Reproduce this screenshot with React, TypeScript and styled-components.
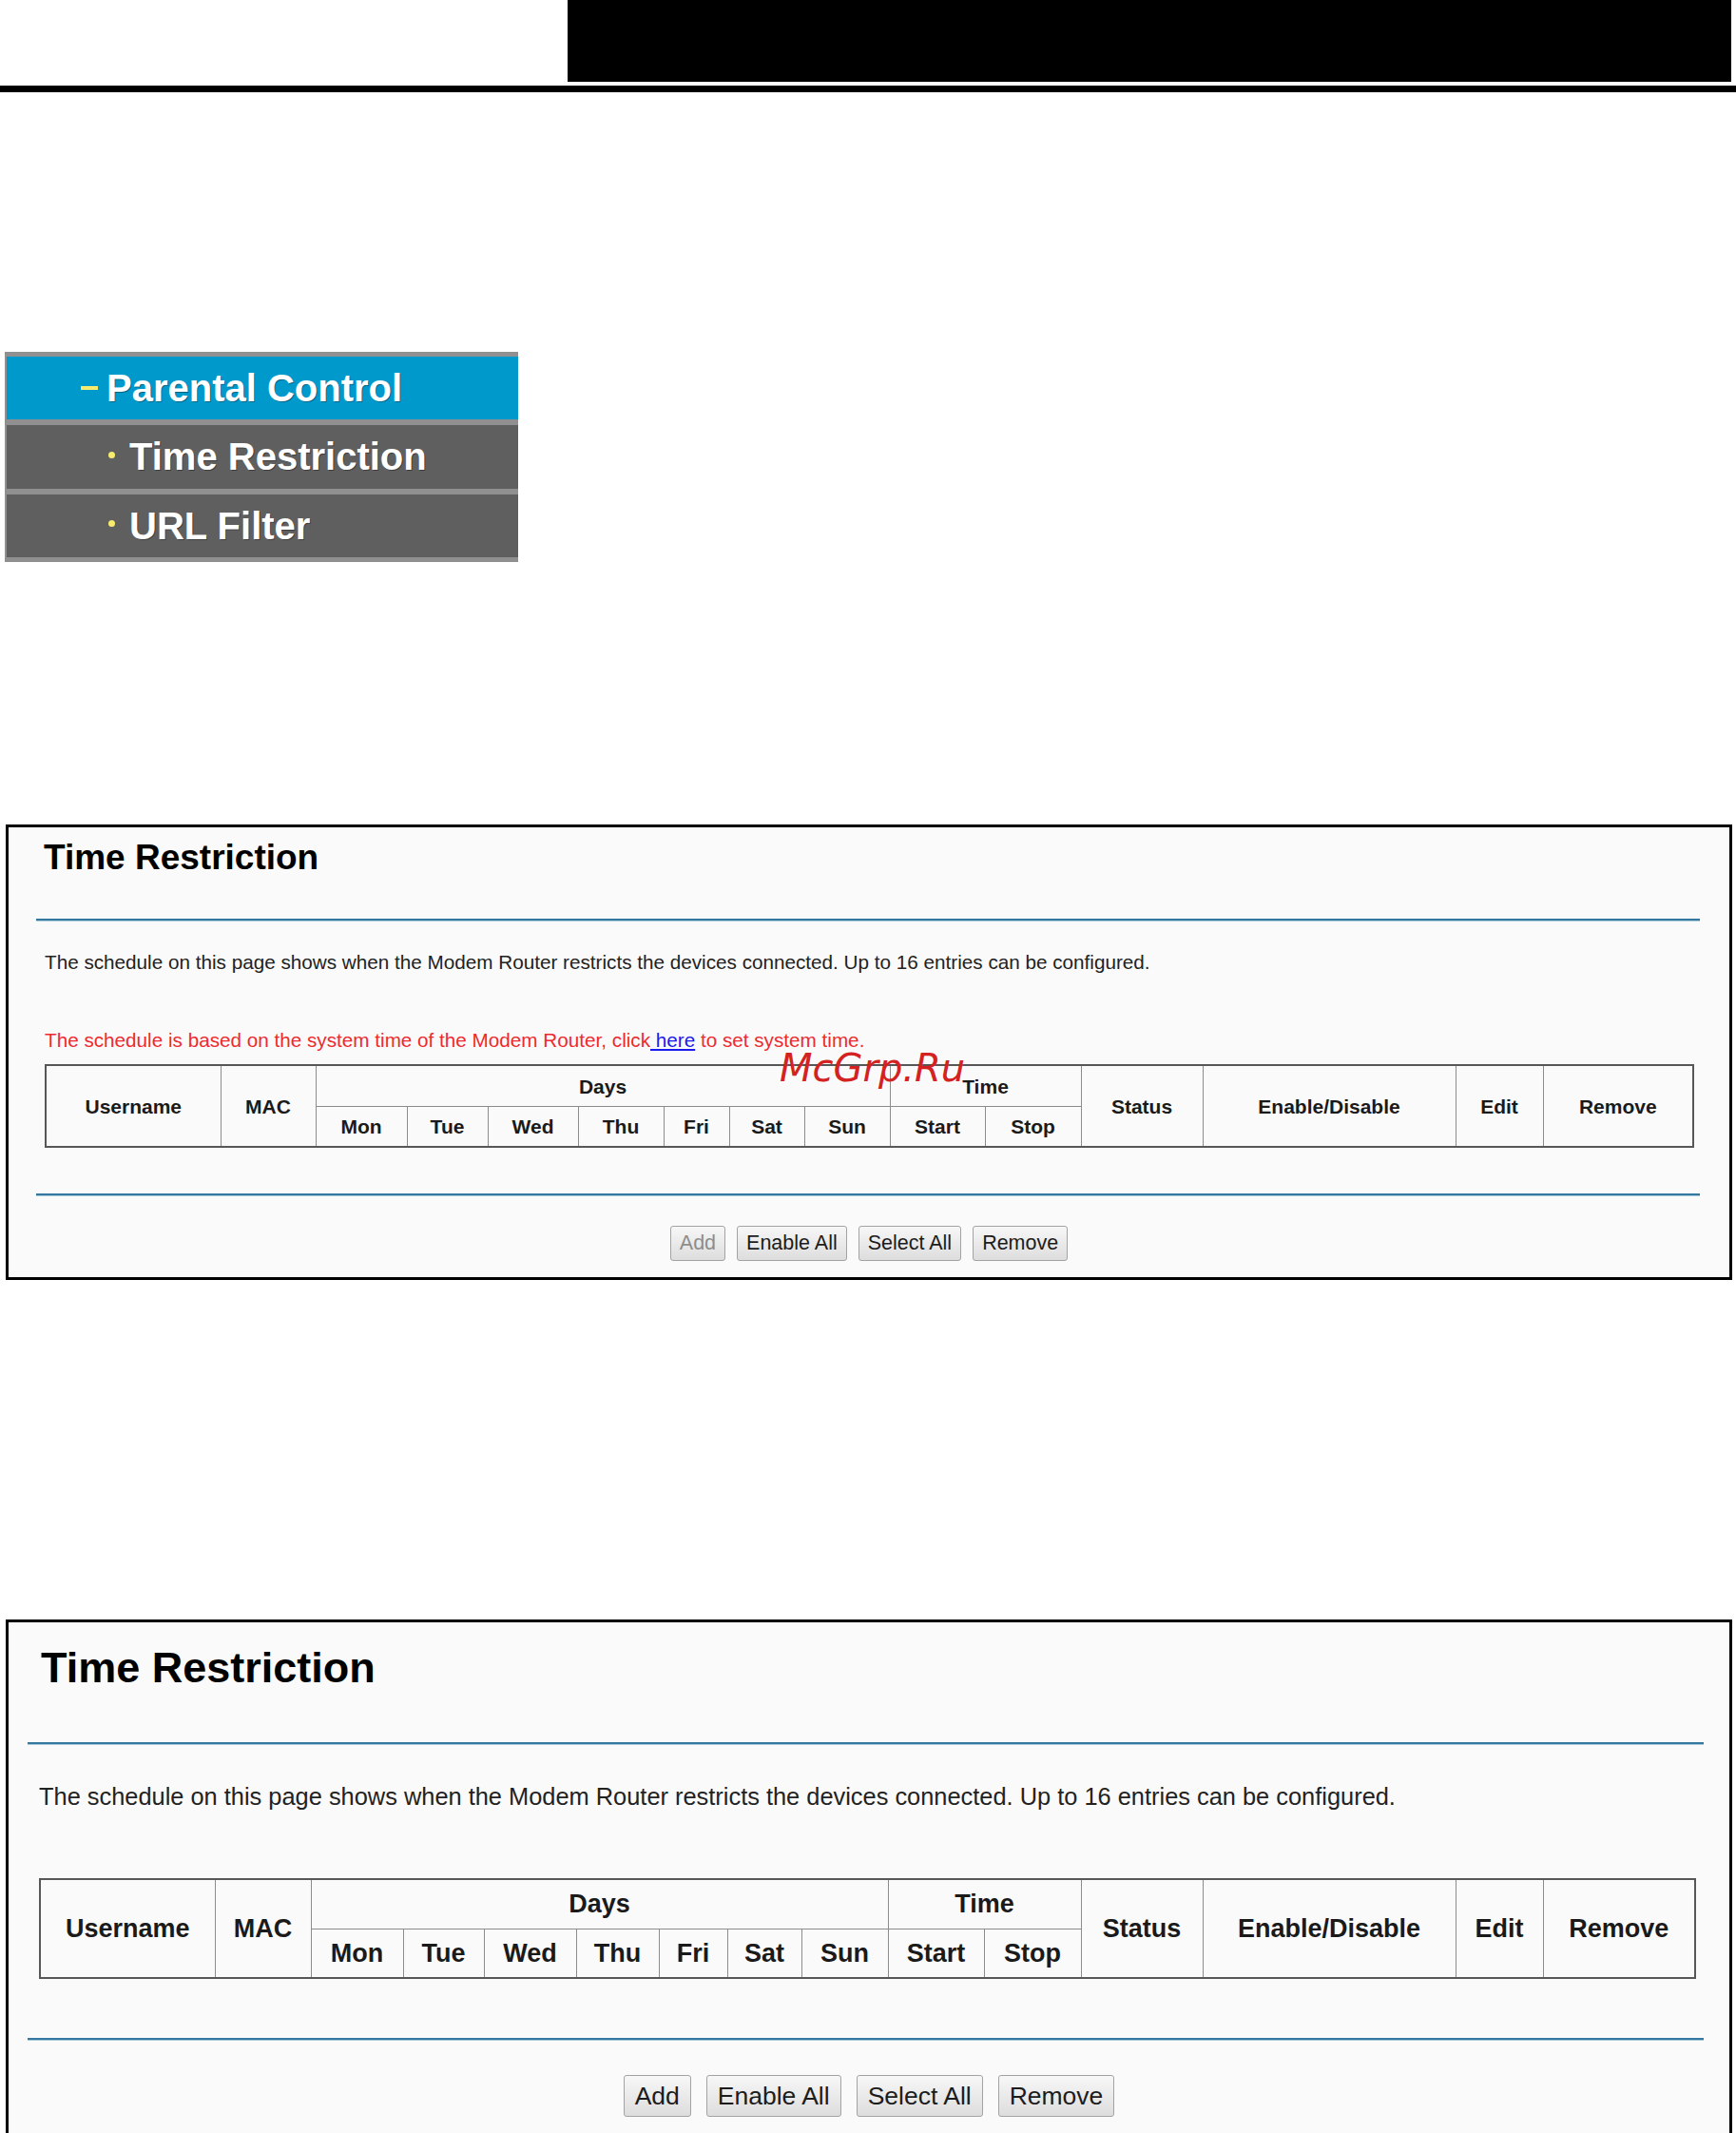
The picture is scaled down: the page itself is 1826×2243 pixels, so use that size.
import styled, { createGlobalStyle } from 'styled-components';

const GlobalStyle = createGlobalStyle`
  html, body {
    margin: 0;
    padding: 0;
    background: #ffffff;
  }
  body {
    font-family: "Liberation Sans", Arial, Helvetica, sans-serif;
    color: #1a1a1a;
  }
`;

type Size = {
  titleSize: number;
  titleTop: number;
  titleLeft: number;
  ruleTop: number;
  ruleLeft: number;
  ruleRight: number;
  descSize: number;
  descTop: number;
  descLeft: number;
  noteTop: number;
  tableTop: number;
  tableLeft: number;
  cols: number[];
  rowH: number;
  thSize: number;
  rule2Top: number;
  btnTop: number;
  btnSize: number;
  btnH: number;
  btnPad: number;
  btnGap: number;
  bottomPad: number;
};

const small: Size = {
  titleSize: 37,
  titleTop: 13,
  titleLeft: 37,
  ruleTop: 46,
  ruleLeft: 29,
  ruleRight: 31,
  descSize: 20.7,
  descTop: 33,
  descLeft: 38,
  noteTop: 61,
  tableTop: 15,
  tableLeft: 38,
  cols: [184, 100, 96, 85, 95, 90, 69, 79, 90, 100, 101, 128, 266, 92, 158],
  rowH: 42.5,
  thSize: 21,
  rule2Top: 48,
  btnTop: 31,
  btnSize: 21.5,
  btnH: 37,
  btnPad: 9,
  btnGap: 12,
  bottomPad: 17,
};

const large: Size = {
  titleSize: 45,
  titleTop: 25,
  titleLeft: 34,
  ruleTop: 56,
  ruleLeft: 20,
  ruleRight: 27,
  descSize: 25.4,
  descTop: 42,
  descLeft: 32,
  noteTop: 0,
  tableTop: 72.5,
  tableLeft: 32,
  cols: [184, 101, 97, 85, 97, 87, 72, 78, 91, 101, 102, 128, 266, 92, 160],
  rowH: 51.5,
  thSize: 27,
  rule2Top: 62,
  btnTop: 36,
  btnSize: 26.5,
  btnH: 44,
  btnPad: 11,
  btnGap: 16,
  bottomPad: 17,
};

/* ---------- page header ---------- */

const Header = styled.header`
  display: flex;
  height: 86px;
`;

const HeaderBlock = styled.div`
  margin-left: 597px;
  width: 1224px;
  background: #000;
`;

const HeaderRule = styled.div`
  margin-top: 4px;
  height: 7px;
  background: #000;
`;

/* ---------- side menu ---------- */

const Menu = styled.nav`
  margin: 273px 0 0 5px;
  width: 538px;
  background: #909090;
  padding: 5px 0 5px 2px;
  display: flex;
  flex-direction: column;
  gap: 6px;
`;

const MenuItem = styled.div<{ $active?: boolean }>`
  height: ${({ $active }) => ($active ? 66 : 66.5)}px;
  display: flex;
  align-items: center;
  padding-left: ${({ $active }) => ($active ? 78 : 107)}px;
  background: ${({ $active }) => ($active ? '#0099cc' : '#5f5f5f')};
  color: #ffffff;
  font-weight: 700;
  font-size: 40px;
  line-height: 1;
  text-shadow: 1px 1px 0 rgba(0, 0, 0, 0.35);
`;

const Minus = styled.span`
  width: 18px;
  height: 4px;
  margin-right: 9px;
  background: #f7ec6e;
`;

const Dot = styled.span`
  width: 7px;
  height: 7px;
  border-radius: 50%;
  margin-right: 15px;
  background: #f7ec6e;
  transform: translateY(-2px);
`;

/* ---------- panels ---------- */

const Panel = styled.section<{ $top: number; $s: Size }>`
  position: relative;
  margin: ${({ $top }) => $top}px 0 0 6px;
  width: 1816px;
  box-sizing: border-box;
  border: 3px solid #000;
  background: #fafafa;
  padding: ${({ $s }) => $s.titleTop}px 0 ${({ $s }) => $s.bottomPad}px;
`;

const Title = styled.h1<{ $s: Size }>`
  margin: 0 0 0 ${({ $s }) => $s.titleLeft}px;
  font-size: ${({ $s }) => $s.titleSize}px;
  line-height: 1;
  font-weight: 700;
  color: #000;
`;

const Rule = styled.div<{ $s: Size; $top: number }>`
  margin: ${({ $top }) => $top}px ${({ $s }) => $s.ruleRight}px 0 ${({ $s }) => $s.ruleLeft}px;
  height: 2px;
  background: #34789f;
  border-bottom: 1px solid #a9cadb;
`;

const Text = styled.p<{ $s: Size; $top: number; $red?: boolean }>`
  margin: ${({ $top }) => $top}px 0 0 ${({ $s }) => $s.descLeft}px;
  font-size: ${({ $s }) => $s.descSize}px;
  line-height: 1;
  height: ${({ $s }) => $s.descSize}px;
  white-space: nowrap;
  color: ${({ $red }) => ($red ? '#ee2a2f' : '#222222')};
`;

const Link = styled.a`
  color: #1a1aee;
  text-decoration: underline;
`;

const Table = styled.table<{ $s: Size }>`
  margin: ${({ $s }) => $s.tableTop}px 0 0 ${({ $s }) => $s.tableLeft}px;
  border-collapse: collapse;
  table-layout: fixed;
  border: 2px solid #575757;
`;

const Th = styled.th<{ $s: Size }>`
  height: ${({ $s }) => $s.rowH - 1}px;
  padding: 0;
  border: 1px solid #8c8c8c;
  font-size: ${({ $s }) => $s.thSize}px;
  line-height: 1;
  font-weight: 700;
  color: #1a1a1a;
  text-align: center;
  vertical-align: middle;
  white-space: nowrap;
`;

const Buttons = styled.div<{ $s: Size }>`
  margin-top: ${({ $s }) => $s.btnTop}px;
  display: flex;
  justify-content: center;
  gap: ${({ $s }) => $s.btnGap}px;
`;

const Button = styled.button<{ $s: Size }>`
  height: ${({ $s }) => $s.btnH}px;
  padding: 0 ${({ $s }) => $s.btnPad}px;
  font-family: "Liberation Sans", Arial, sans-serif;
  font-size: ${({ $s }) => $s.btnSize}px;
  line-height: 1;
  color: #1c1c1c;
  background: linear-gradient(#f7f7f7, #dddddd);
  border: 1px solid #a3a3a3;
  border-radius: 3px;

  &:disabled {
    color: #8d8d8d;
  }
`;

// watermark stamped over the first screenshot
const Watermark = styled.div`
  position: absolute;
  left: 811px;
  top: 233px;
  font-family: "DejaVu Sans", sans-serif;
  font-style: italic;
  font-size: 40px;
  line-height: 1;
  color: #d42222;
  pointer-events: none;
`;

const days = ['Mon', 'Tue', 'Wed', 'Thu', 'Fri', 'Sat', 'Sun'];

const ScheduleTable = ({ s }: { s: Size }) => (
  <Table $s={s}>
    <colgroup>
      {s.cols.map((w, i) => (
        <col key={i} style={{ width: w }} />
      ))}
    </colgroup>
    <thead>
      <tr>
        <Th $s={s} rowSpan={2}>Username</Th>
        <Th $s={s} rowSpan={2}>MAC</Th>
        <Th $s={s} colSpan={7}>Days</Th>
        <Th $s={s} colSpan={2}>Time</Th>
        <Th $s={s} rowSpan={2}>Status</Th>
        <Th $s={s} rowSpan={2}>Enable/Disable</Th>
        <Th $s={s} rowSpan={2}>Edit</Th>
        <Th $s={s} rowSpan={2}>Remove</Th>
      </tr>
      <tr>
        {days.map((d) => (
          <Th $s={s} key={d}>{d}</Th>
        ))}
        <Th $s={s}>Start</Th>
        <Th $s={s}>Stop</Th>
      </tr>
    </thead>
  </Table>
);

const RestrictionPanel = ({ s, top, note, addDisabled }: { s: Size; top: number; note?: boolean; addDisabled?: boolean }) => (
  <Panel $top={top} $s={s}>
    <Title $s={s}>Time Restriction</Title>
    <Rule $s={s} $top={s.ruleTop} />
    <Text $s={s} $top={s.descTop}>
      The schedule on this page shows when the Modem Router restricts the devices connected. Up to 16 entries can be configured.
    </Text>
    {note && (
      <Text $s={s} $top={s.noteTop} $red>
        The schedule is based on the system time of the Modem Router, click<Link href="#"> here</Link> to set system time.
      </Text>
    )}
    <ScheduleTable s={s} />
    <Rule $s={s} $top={s.rule2Top} />
    <Buttons $s={s}>
      <Button $s={s} disabled={addDisabled}>Add</Button>
      <Button $s={s}>Enable All</Button>
      <Button $s={s}>Select All</Button>
      <Button $s={s}>Remove</Button>
    </Buttons>
    {note && <Watermark>McGrp.Ru</Watermark>}
  </Panel>
);

export default function App() {
  return (
    <>
      <GlobalStyle />
      <Header>
        <HeaderBlock />
      </Header>
      <HeaderRule />
      <Menu>
        <MenuItem $active>
          <Minus />
          Parental Control
        </MenuItem>
        <MenuItem>
          <Dot />
          Time Restriction
        </MenuItem>
        <MenuItem>
          <Dot />
          URL Filter
        </MenuItem>
      </Menu>
      <RestrictionPanel s={small} top={276} note addDisabled />
      <RestrictionPanel s={large} top={357} />
    </>
  );
}
